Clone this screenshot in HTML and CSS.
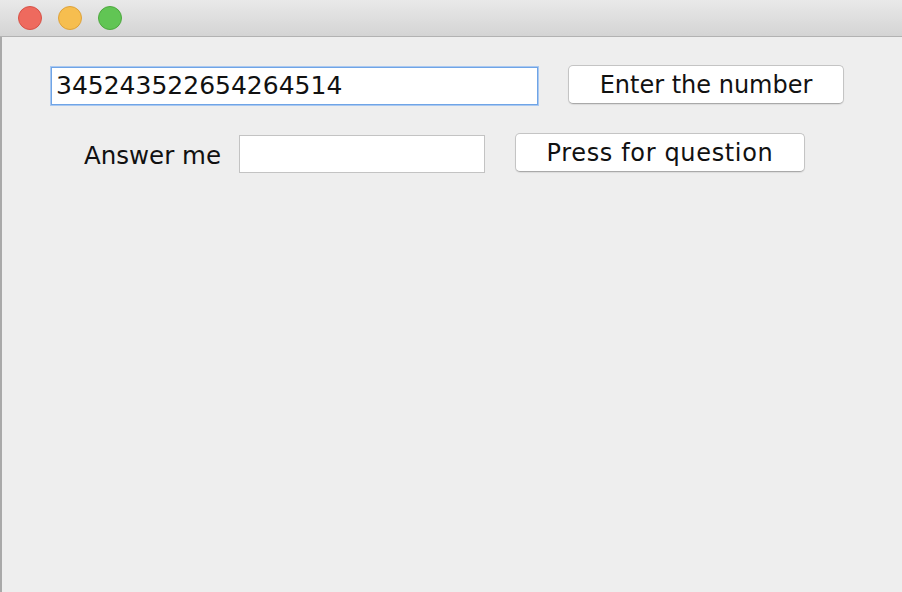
FILE: index.html
```html
<!DOCTYPE html>
<html>
<head>
<meta charset="utf-8">
<link rel="stylesheet" href="styles.css">
</head>
<body>
<div class="window">
  <div class="titlebar">
    <span class="light red"></span>
    <span class="light yellow"></span>
    <span class="light green"></span>
  </div>
  <div class="content">
    <div class="row row-one">
      <div class="field field-focus">345243522654264514</div>
      <div class="button button-enter">Enter the number</div>
    </div>
    <div class="row row-two">
      <span class="label">Answer me</span>
      <div class="field field-plain"></div>
      <div class="button button-press">Press for question</div>
    </div>
  </div>
</div>
</body>
</html>
```
FILE: styles.css
```css
html, body {
  margin: 0;
  padding: 0;
  width: 902px;
  height: 592px;
  overflow: hidden;
  background: #eeeeee;
  font-family: "DejaVu Sans", "Liberation Sans", sans-serif;
  color: #111;
}
.window {
  display: flex;
  flex-direction: column;
  height: 592px;
}
.titlebar {
  height: 36px;
  border-bottom: 1px solid #b2b2b2;
  background: linear-gradient(#e9e9e9, #d4d4d4);
  display: flex;
  align-items: center;
  padding-left: 18px;
  gap: 16px;
  box-sizing: content-box;
}
.light {
  width: 22px;
  height: 22px;
  border-radius: 50%;
  box-sizing: content-box;
}
.red { background: #ee6a5e; border: 1px solid #d75247; }
.yellow { background: #f6be4f; border: 1px solid #dea23a; }
.green { background: #61c554; border: 1px solid #4ea83f; }
.content {
  flex: 1;
  border-left: 2px solid #a9a9a9;
  padding-top: 29px;
  display: flex;
  flex-direction: column;
}
.row {
  display: flex;
  align-items: center;
}
.row-one {
  padding-left: 49px;
  height: 40px;
}
.row-two {
  padding-left: 82px;
  height: 40px;
  margin-top: 28px;
}
.field {
  background: #fff;
  box-sizing: border-box;
  height: 38px;
  font-size: 25px;
  line-height: 36px;
  padding-left: 4px;
  white-space: nowrap;
}
.field-focus {
  width: 487px;
  border: 1px solid #6fa4e6;
  box-shadow: 0 0 0 1px #a9c8f0;
}
.field-plain {
  width: 246px;
  border: 1px solid #c3c3c3;
  margin-left: 18px;
}
.label {
  font-size: 24.5px;
  padding-top: 2px;
}
.button {
  background: #fff;
  border: 1px solid #c4c4c4;
  border-bottom-color: #a9a9a9;
  border-radius: 5px;
  box-shadow: 0 1px 1px rgba(0,0,0,0.08);
  box-sizing: border-box;
  height: 39px;
  font-size: 24px;
  display: flex;
  align-items: center;
  justify-content: center;
  margin-bottom: 3px;
}
.button-enter {
  width: 276px;
  margin-left: 30px;
}
.button-press {
  width: 290px;
  margin-left: 30px;
  letter-spacing: 0.65px;
}
```
